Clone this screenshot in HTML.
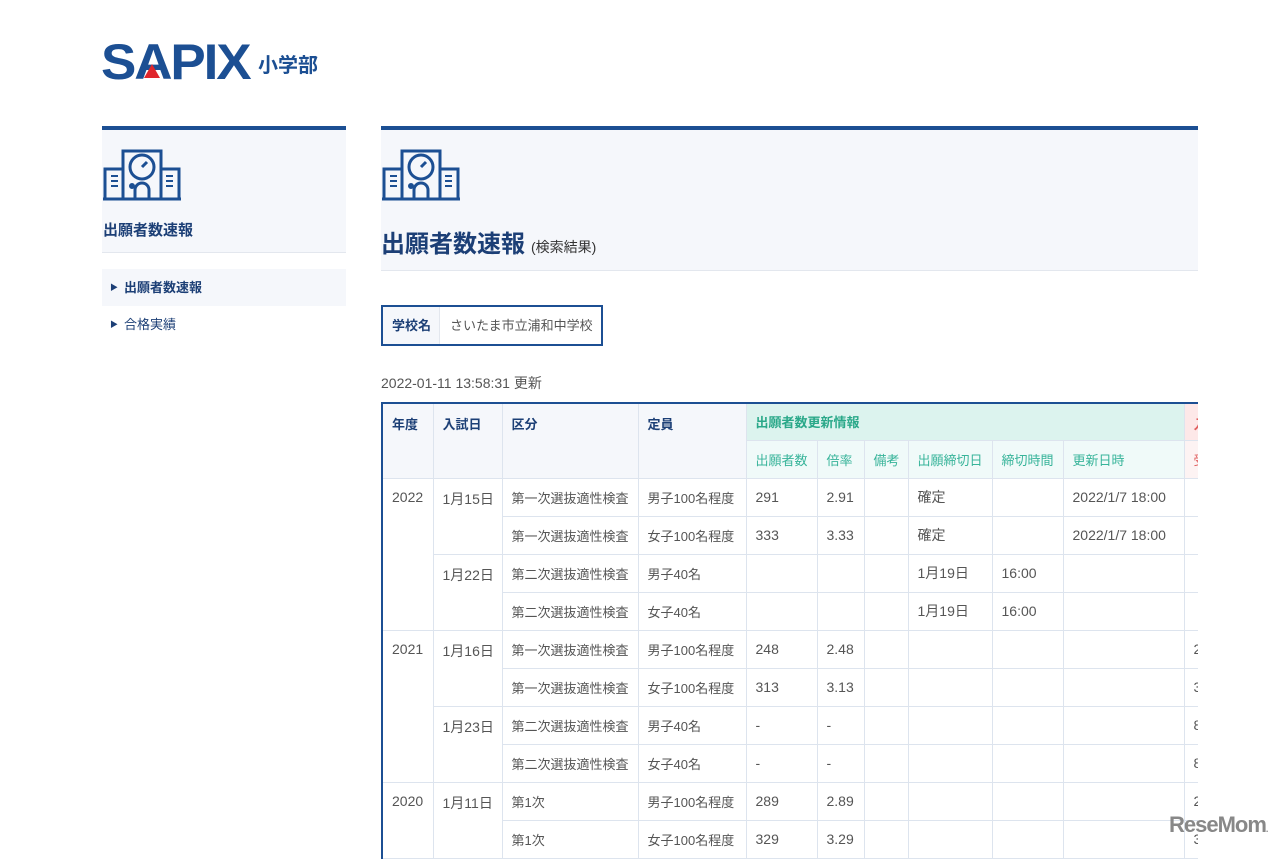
<!DOCTYPE html>
<html><head><meta charset="utf-8"><style>
*{margin:0;padding:0;box-sizing:border-box}
body{width:1280px;height:848px;overflow:hidden;background:#fff;font-family:"Liberation Sans","Noto Sans CJK JP",sans-serif;color:#555;position:relative}
.abs{position:absolute}
.side{left:102px;top:126px;width:244px;height:127px;background:#f5f7fb;border-top:4px solid #1c4f93;border-bottom:1px solid #e3e7ee}
.main{left:381px;top:126px;width:817px;height:145px;background:#f5f7fb;border-top:4px solid #1c4f93;border-bottom:1px solid #e3e7ee}
.blue{color:#1c3f76}
.wrap{left:381px;top:402px;width:817px;height:460px;overflow:hidden}
table{border-collapse:collapse;table-layout:fixed;width:902px;font-size:14px}
td,th{border:1px solid #dde4ee;padding:0 9px;height:38px;text-align:left;white-space:nowrap;overflow:hidden;font-weight:normal;vertical-align:middle}
td.j{font-size:13px}
th{font-weight:bold;color:#1c3f76;background:#f5f7fb;vertical-align:top;padding-top:10px;font-size:13px}
th.g{background:#dcf3ee;color:#2aa889;vertical-align:middle;padding-top:0}
th.gs{background:#f0faf9;color:#38b49a;font-weight:normal;vertical-align:middle;padding-top:0}
th.r{background:#fde8e8;color:#e06060}
th.rs{background:#fdf3f3;color:#e06060;font-weight:normal;vertical-align:middle;padding-top:0}
td.t{vertical-align:top;padding-top:10px}
table{border-left:2px solid #1c4f93;border-top:2px solid #1c4f93}
</style></head><body>
<div class="abs" style="left:101px;top:33px;font:bold 50px 'Liberation Sans',sans-serif;color:#1c4f93;letter-spacing:-2px;transform:scaleX(1.06);transform-origin:left">SAPIX</div>
<div class="abs" style="left:144px;top:64px;width:0;height:0;border-left:8px solid transparent;border-right:8px solid transparent;border-bottom:14px solid #e0262b"></div>
<div class="abs" style="left:258px;top:49px;font-size:20px;font-weight:bold;color:#1c4f93">小学部</div>

<div class="abs side"></div>
<div class="abs main"></div>
<svg class="abs" style="left:103px;top:147px" width="78" height="54" viewBox="0 0 78 54" fill="none" stroke="#1c4f93" stroke-width="3">
<path d="M2 52V22h18M58 22h18v30M20 52V4h38v48"/><path d="M0 52h78"/>
<circle cx="39" cy="20" r="12"/><path d="M39 20l5-5M32 52v-9a7 7 0 0 1 14 0v9"/>
<path d="M8 29h7M8 34h7M8 39h7M63 29h7M63 34h7M63 39h7" stroke-width="2"/><circle cx="29" cy="39" r="1.5" fill="#1c4f93"/>
</svg>
<svg class="abs" style="left:382px;top:147px" width="78" height="54" viewBox="0 0 78 54" fill="none" stroke="#1c4f93" stroke-width="3">
<path d="M2 52V22h18M58 22h18v30M20 52V4h38v48"/><path d="M0 52h78"/>
<circle cx="39" cy="20" r="12"/><path d="M39 20l5-5M32 52v-9a7 7 0 0 1 14 0v9"/>
<path d="M8 29h7M8 34h7M8 39h7M63 29h7M63 34h7M63 39h7" stroke-width="2"/><circle cx="29" cy="39" r="1.5" fill="#1c4f93"/>
</svg>
<div class="abs blue" style="left:103px;top:219px;font-size:15px;font-weight:bold">出願者数速報</div>
<div class="abs blue" style="left:381px;top:224px;font-size:24px;font-weight:bold">出願者数速報<span style="font-size:14px;font-weight:normal;color:#333;margin-left:6px">(検索結果)</span></div>

<div class="abs" style="left:102px;top:269px;width:244px;height:37px;background:#f5f7fb"></div>
<div class="abs blue" style="left:110px;top:277px;font-size:13px;font-weight:bold"><span style="font-size:8px;margin-right:6px;vertical-align:2px">▶</span>出願者数速報</div>
<div class="abs blue" style="left:110px;top:314px;font-size:13px"><span style="font-size:8px;margin-right:6px;vertical-align:2px">▶</span>合格実績</div>

<div class="abs" style="left:381px;top:305px;width:222px;height:41px;border:2px solid #1c4f93;display:flex;font-size:13px">
<div style="width:57px;background:#f5f7fb;border-right:1px solid #e3e7ee;font-weight:bold;color:#1c3f76;line-height:37px;padding-left:9px">学校名</div>
<div style="line-height:37px;padding-left:10px;color:#555">さいたま市立浦和中学校</div></div>
<div class="abs" style="left:381px;top:373px;font-size:14px;color:#555">2022-01-11 13:58:31 更新</div>

<div class="abs wrap"><table>
<colgroup><col style="width:51px"><col style="width:69px"><col style="width:136px"><col style="width:108px"><col style="width:71px"><col style="width:47px"><col style="width:44px"><col style="width:84px"><col style="width:71px"><col style="width:121px"><col style="width:100px"></colgroup>
<tr><th rowspan="2">年度</th><th rowspan="2">入試日</th><th rowspan="2">区分</th><th rowspan="2">定員</th><th class="g" colspan="6" style="height:37px">出願者数更新情報</th><th class="r" style="height:37px">入試結果</th></tr>
<tr><th class="gs">出願者数</th><th class="gs">倍率</th><th class="gs">備考</th><th class="gs">出願締切日</th><th class="gs">締切時間</th><th class="gs">更新日時</th><th class="rs">受験者数</th></tr>
<tr><td rowspan="4" class="t">2022</td><td rowspan="2" class="t">1月15日</td><td class="j">第一次選抜適性検査</td><td class="j">男子100名程度</td><td>291</td><td>2.91</td><td></td><td>確定</td><td></td><td>2022/1/7 18:00</td><td></td></tr>
<tr><td class="j">第一次選抜適性検査</td><td class="j">女子100名程度</td><td>333</td><td>3.33</td><td></td><td>確定</td><td></td><td>2022/1/7 18:00</td><td></td></tr>
<tr><td rowspan="2" class="t">1月22日</td><td class="j">第二次選抜適性検査</td><td class="j">男子40名</td><td></td><td></td><td></td><td>1月19日</td><td>16:00</td><td></td><td></td></tr>
<tr><td class="j">第二次選抜適性検査</td><td class="j">女子40名</td><td></td><td></td><td></td><td>1月19日</td><td>16:00</td><td></td><td></td></tr>
<tr><td rowspan="4" class="t">2021</td><td rowspan="2" class="t">1月16日</td><td class="j">第一次選抜適性検査</td><td class="j">男子100名程度</td><td>248</td><td>2.48</td><td></td><td></td><td></td><td></td><td>241</td></tr>
<tr><td class="j">第一次選抜適性検査</td><td class="j">女子100名程度</td><td>313</td><td>3.13</td><td></td><td></td><td></td><td></td><td>308</td></tr>
<tr><td rowspan="2" class="t">1月23日</td><td class="j">第二次選抜適性検査</td><td class="j">男子40名</td><td>-</td><td>-</td><td></td><td></td><td></td><td></td><td>80</td></tr>
<tr><td class="j">第二次選抜適性検査</td><td class="j">女子40名</td><td>-</td><td>-</td><td></td><td></td><td></td><td></td><td>80</td></tr>
<tr><td rowspan="2" class="t">2020</td><td rowspan="2" class="t">1月11日</td><td class="j">第1次</td><td class="j">男子100名程度</td><td>289</td><td>2.89</td><td></td><td></td><td></td><td></td><td>281</td></tr>
<tr><td class="j">第1次</td><td class="j">女子100名程度</td><td>329</td><td>3.29</td><td></td><td></td><td></td><td></td><td>320</td></tr>
</table></div>
<div class="abs" style="left:1169px;top:812px;font-size:22px;font-weight:bold;color:#888;letter-spacing:-1px">ReseMom<span style="font-size:9px">.</span></div>
</body></html>
